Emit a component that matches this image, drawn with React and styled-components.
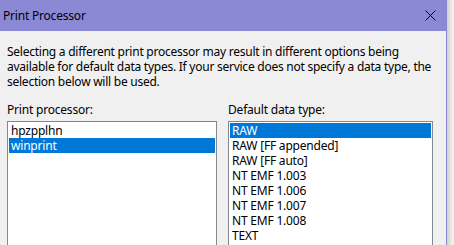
import React from "react"
import styled, { createGlobalStyle } from "styled-components"

const GlobalStyle = createGlobalStyle`
  html, body {
    margin: 0;
    padding: 0;
    background: #f4f4f4;
    overflow: hidden;
  }
`

const Screen = styled.div`
  display: flex;
  width: 454px;
  height: 245px;
  overflow: hidden;
  font-family: "Noto Sans", "Open Sans", sans-serif;
  font-size: 12px;
  color: #000;
`
const Window = styled.div`
  width: 446px;
  border-right: 1px solid #8b89d6;
  background: #f0f0f0;
  display: flex;
  flex-direction: column;
`
const Shadow = styled.div`
  flex: 1;
  background: linear-gradient(to right, #cfcfcf, #e6e6e6 50%, #f4f4f4);
`
const TitleBar = styled.div`
  height: 30px;
  flex: none;
  background: #8b89d6;
  display: flex;
  align-items: center;
  justify-content: space-between;
  padding: 0 10px 1px 3px;
`
const Title = styled.span`
  letter-spacing: -0.2px;
`
const Body = styled.div`
  padding: 13px 14px 0 7px;
`
const Intro = styled.p`
  margin: 0;
  line-height: 15px;
  letter-spacing: -0.25px;
`
const Columns = styled.div`
  display: grid;
  grid-template-columns: 210px 205px;
  column-gap: 11px;
  margin-top: 13px;
`
const Label = styled.div`
  line-height: 15px;
  margin-bottom: 4px;
  letter-spacing: -0.2px;
`
const List = styled.div`
  height: 140px;
  background: #fff;
  border: 1px solid #828790;
  padding: 1px;
`
const Item = styled.div`
  height: 15px;
  line-height: 15px;
  padding-left: 2px;
  white-space: nowrap;
  letter-spacing: -0.2px;
  background: ${(p) => (p.selected ? "#0078d7" : "transparent")};
  color: ${(p) => (p.selected ? "#fff" : "#000")};
`

const processors = ["hpzpplhn", "winprint"]
const dataTypes = [
  "RAW",
  "RAW [FF appended]",
  "RAW [FF auto]",
  "NT EMF 1.003",
  "NT EMF 1.006",
  "NT EMF 1.007",
  "NT EMF 1.008",
  "TEXT",
]

const CloseIcon = () => (
  <svg width="11" height="11" viewBox="0 0 11 11">
    <path d="M0.5 0.5 L10.5 10.5 M10.5 0.5 L0.5 10.5" stroke="#000" strokeWidth="1" />
  </svg>
)

export default function App() {
  return (
    <>
      <GlobalStyle />
      <Screen>
        <Window>
          <TitleBar>
            <Title>Print Processor</Title>
            <CloseIcon />
          </TitleBar>
          <Body>
            <Intro>
              Selecting a different print processor may result in different options being
              available for default data types. If your service does not specify a data type, the
              selection below will be used.
            </Intro>
            <Columns>
              <div>
                <Label>Print processor:</Label>
                <List>
                  {processors.map((p) => (
                    <Item key={p} selected={p === "winprint"}>
                      {p}
                    </Item>
                  ))}
                </List>
              </div>
              <div>
                <Label>Default data type:</Label>
                <List>
                  {dataTypes.map((d) => (
                    <Item key={d} selected={d === "RAW"}>
                      {d}
                    </Item>
                  ))}
                </List>
              </div>
            </Columns>
          </Body>
        </Window>
        <Shadow />
      </Screen>
    </>
  )
}
